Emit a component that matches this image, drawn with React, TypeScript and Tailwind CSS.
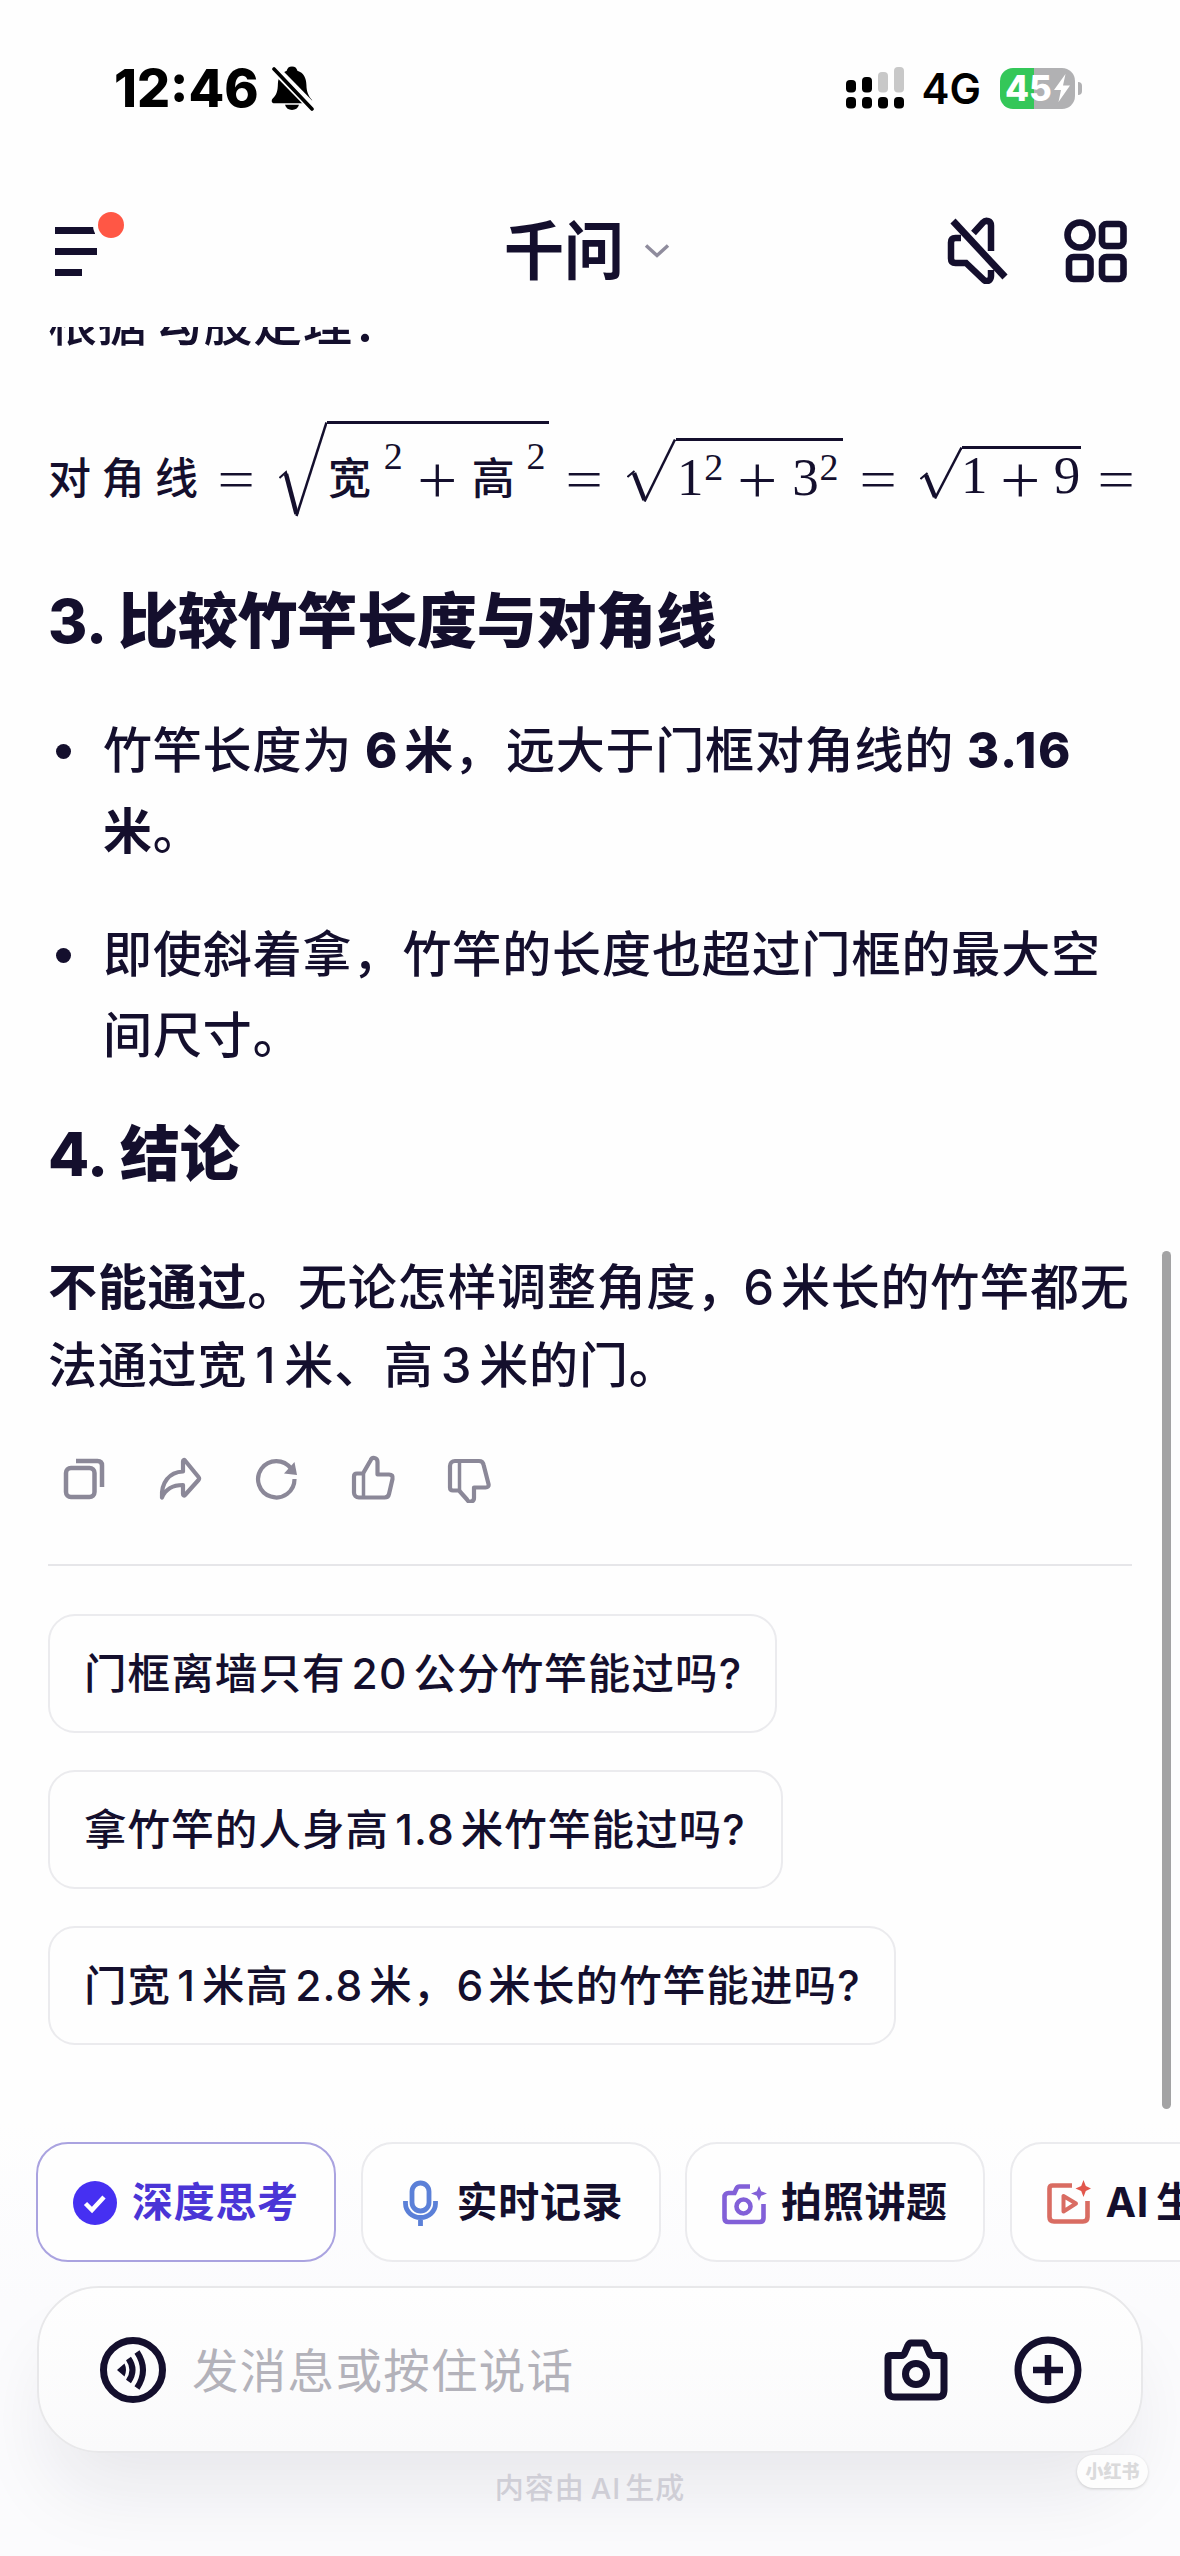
import type { ReactNode } from "react";

const Ink = "#140f2d";

function Bell() {
  return (
    <svg width="44" height="46" viewBox="0 0 44 46" className="ml-[12px]" fill="#000">
      <path d="M21 1.500c3 0 4.800 1.600 5.400 4.200 6.400 2 8.800 7.500 9 14 .2 7.500 2 11 5.600 15.300.6 1.600-.4 3.300-2.500 3.300H3.500c-2.600 0-3.500-2-2.200-4.300 4.200-4 5.500-8 5.600-15.300.2-6 3.300-11 8.800-13C16.300 3.100 18 1.500 21 1.500z" />
      <path d="M14 39.800h14c-1 3.400-3.600 5.200-7 5.200s-6-1.800-7-5.200z" />
      <path d="M1 1l41 42" stroke="#fefefe" strokeWidth="9" />
      <path d="M3 4l38 40" stroke="#000" strokeWidth="3.600" strokeLinecap="round" />
    </svg>
  );
}

function Signal() {
  return (
    <svg width="58" height="42" viewBox="0 0 58 42">
      <rect x="0" y="13" width="10" height="12.500" rx="4" />
      <rect x="16" y="10" width="10" height="15.500" rx="4" />
      <rect x="32" y="5" width="10" height="20.500" rx="4" fill="#c8c8c8" />
      <rect x="48" y="0" width="10" height="25.500" rx="4" fill="#c8c8c8" />
      <rect x="0" y="30" width="10" height="11.500" rx="4" />
      <rect x="16" y="30" width="10" height="11.500" rx="4" />
      <rect x="32" y="30" width="10" height="11.500" rx="4" />
      <rect x="48" y="30" width="10" height="11.500" rx="4" />
    </svg>
  );
}

function Battery() {
  return (
    <div className="ml-[19px] flex items-center">
      <div className="flex h-[41px] w-[75px] items-center rounded-[13px] bg-[linear-gradient(90deg,#34c759_34px,#b1b1b3_34px)] pl-[5px] text-white">
        <span className="text-[35px] leading-none font-extrabold">45</span>
        <svg width="18" height="30" viewBox="0 0 17 30" className="ml-px" fill="#fff">
          <path d="M12 1L0.500 17h7L5 29 16.500 12.500h-7z" />
        </svg>
      </div>
      <div className="ml-[3px] h-[13px] w-[4px] rounded-r-full bg-[#b1b1b3]" />
    </div>
  );
}

function Mute() {
  return (
    <svg width="64" height="68" viewBox="0 0 64 68" fill="none" stroke={Ink} strokeWidth="6.500">
      <path d="M27.500 17l9.500-10.500c3-3 8-1.500 8 3V35" />
      <path d="M15 22H9.500C6.500 22 5 23.500 5 26.500v16c0 3 1.500 4.500 4.500 4.500H20l18 17c3 2.500 7 .5 7-4v-6" />
      <path d="M1 8l52 56" stroke="#fefefe" strokeWidth="5" transform="translate(2 2)" opacity="0" />
      <path d="M7 5l52 56" strokeWidth="7" />
    </svg>
  );
}

function Grid() {
  return (
    <svg width="64" height="64" viewBox="0 0 64 64" fill="none" stroke={Ink} strokeWidth="6.600">
      <circle cx="16" cy="16" r="12.500" />
      <rect x="38" y="5" width="21.500" height="22" rx="4.500" />
      <rect x="5" y="38" width="21.500" height="22" rx="4.500" />
      <rect x="38" y="38" width="21.500" height="22" rx="4.500" />
    </svg>
  );
}

function Op({ plus }: { plus?: boolean }) {
  return (
    <span className="flex w-[36px] shrink-0 justify-center font-['Inter'] text-[57px] leading-[40px] font-extralight">
      <span className={plus ? "scale-x-[1.350] scale-y-[1.300]" : "scale-x-[1.450]"}>{plus ? "+" : "="}</span>
    </span>
  );
}

function Num({ children, sup }: { children: ReactNode; sup?: string }) {
  return (
    <span className="-mb-[3px] flex font-['Liberation_Serif'] text-[53px] leading-[53px]">
      {children}
      {sup && <span className="-mt-[3px] text-[38px] leading-[38px]">{sup}</span>}
    </span>
  );
}

function Sqrt({ h, children }: { h: "lg" | "md" | "sm"; children: ReactNode }) {
  const box =
    h === "lg" ? "h-[96px] -mb-[21px]" : h === "md" ? "h-[64px] -mb-[6px]" : "h-[53px] -mb-[3px]";
  return (
    <span className={"flex items-stretch self-end " + box}>
      {h === "lg" && (
        <svg width="48" height="96" viewBox="0 0 48 96" fill="none" stroke={Ink}>
          <path d="M0.500 57l6.500-6 11 43" strokeWidth="2" />
          <path d="M7 53l10.500 40" strokeWidth="4.500" />
          <path d="M17.500 95L47.500 1.500" strokeWidth="2.500" />
        </svg>
      )}
      {h === "md" && (
        <svg width="49" height="64" viewBox="0 0 49 64" fill="none" stroke={Ink}>
          <path d="M0.500 39l7-6" strokeWidth="2" />
          <path d="M7 35l10.500 27" strokeWidth="4.500" />
          <path d="M17.500 63.500L48 1.500" strokeWidth="2.500" />
        </svg>
      )}
      {h === "sm" && (
        <svg width="42" height="53" viewBox="0 0 42 53" fill="none" stroke={Ink}>
          <path d="M0.500 33l7-6" strokeWidth="2" />
          <path d="M6 29l9 22" strokeWidth="4.500" />
          <path d="M15 52.500L41.500 1.500" strokeWidth="2.500" />
        </svg>
      )}
      <span className="flex items-end border-t-[3px] border-[#140f2d]">{children}</span>
    </span>
  );
}

function Formula() {
  return (
    <div className="mt-[56px] flex h-[75px] w-[1084px] shrink-0 items-end [clip-path:inset(-20px_0_-40px_0)]">
      <span className="mr-[6px] -mb-[4px] w-[165px] shrink-0 text-[43px] leading-[43px] font-medium tracking-[10.500px] whitespace-nowrap">
        对角线
      </span>
      <Op />
      <span className="w-[24px] shrink-0" />
      <Sqrt h="lg">
        <span className="mb-[21px] flex w-[222px] items-end text-[43px] leading-[43px] font-medium">
          <span className="-mb-[4px] ml-px">宽</span>
          <span className="mb-[21px] ml-[12px] font-['Liberation_Serif'] text-[38px] leading-[38px] font-normal">2</span>
          <span className="w-[16px]" />
          <Op plus />
          <span className="-mb-[4px] ml-[16px]">高</span>
          <span className="mb-[21px] ml-[11px] font-['Liberation_Serif'] text-[38px] leading-[38px] font-normal">2</span>
        </span>
      </Sqrt>
      <span className="w-[18px] shrink-0" />
      <Op />
      <span className="w-[24px] shrink-0" />
      <Sqrt h="md">
        <span className="mb-px flex w-[167px] items-end">
          <span className="ml-px"><Num sup="2">1</Num></span>
          <span className="w-[16px]" />
          <span className="mb-[5px]"><Op plus /></span>
          <span className="ml-[16px]"><Num sup="2">3</Num></span>
        </span>
      </Sqrt>
      <span className="w-[18px] shrink-0" />
      <Op />
      <span className="w-[23px] shrink-0" />
      <Sqrt h="sm">
        <span className="flex w-[119px] items-end">
          <span className="-ml-px"><Num>1</Num></span>
          <span className="w-[15px]" />
          <span className="mb-[3px]"><Op plus /></span>
          <span className="ml-[15px]"><Num>9</Num></span>
        </span>
      </Sqrt>
      <span className="w-[18px] shrink-0" />
      <Op />
    </div>
  );
}

function ActionRow() {
  return (
    <div className="mt-[49px] ml-[13px] flex h-[48px] shrink-0 items-center gap-[48px]">
      <svg width="48" height="48" viewBox="0 0 48 48" fill="none" stroke="#8b8898" strokeWidth="4.500">
        <rect x="5" y="13" width="28.500" height="29" rx="5" />
        <path d="M15 6h21.500c3 0 4.500 1.500 4.500 4.500v21.500" />
      </svg>
      <svg width="48" height="48" viewBox="0 0 48 48" fill="none" stroke="#8b8898" strokeWidth="4.200" strokeLinejoin="round">
        <path d="M26 6.500c0-1.500 1-2 2-1L41.500 22c.8 1 .8 2 0 3L28 40c-1 1-2 .5-2-1v-9C16.500 30 9 33 5 42.500 4 28 12 17 26 16.500z" />
      </svg>
      <svg width="48" height="48" viewBox="0 0 48 48" fill="none" stroke="#8b8898" strokeWidth="4.200">
        <path d="M41.500 24A18.200 18.200 0 1 1 38 13.500" />
        <path d="M41.500 7L44 20l-13-1.500z" fill="#8b8898" stroke="none" />
      </svg>
      <svg width="48" height="48" viewBox="0 0 48 48" fill="none" stroke="#8b8898" strokeWidth="4.200" strokeLinejoin="round">
        <path d="M14 18.500H8c-2 0-3 1-3 3v16c0 3 2 5 5 5h25.500c2.500 0 4-1 4.500-3.500l3.500-15c.5-3-.5-4.500-3.500-4.500H28.500V7c0-4.500-5.500-5.500-7-1.500z" />
        <path d="M14.500 18.500v24" strokeWidth="3.500" />
      </svg>
      <svg width="48" height="48" viewBox="0 0 48 48" fill="none" stroke="#8b8898" strokeWidth="4.200" strokeLinejoin="round">
        <path d="M14 35.500H8c-2 0-3-1-3-3V11c0-3 2-5 5-5h24c2.500 0 4 1 4.500 3.500L43.500 29c.5 2-.5 3.500-3 3.500H29V43c0 4-5.500 5-7 1.500z" />
        <path d="M14.500 6v29.500" strokeWidth="3.500" />
      </svg>
    </div>
  );
}

function Suggestion({ width, children }: { width: string; children: ReactNode }) {
  return (
    <div className={"flex h-[119px] shrink-0 items-center rounded-[27px] border-2 border-[#ebebee] pt-[2px] pl-[34px] text-[42.500px] font-medium tracking-[1.100px] whitespace-nowrap " + width}>
      <span>{children}</span>
    </div>
  );
}

function N({ children }: { children: ReactNode }) {
  return <span className="mx-[6px]">{children}</span>;
}

function Tag({ active, icon, children }: { active?: boolean; icon: ReactNode; children: ReactNode }) {
  return (
    <div className={"flex h-[120px] w-[300px] shrink-0 items-center rounded-[32px] border-2 bg-[#fefefe] pt-px pl-[34px] text-[41px] font-bold tracking-[0.700px] whitespace-nowrap " + (active ? "border-[#aaa3e0] text-[#4a35d6]" : "border-[#ebebee]")}>
      <span className="mr-[12px] flex w-[48px] shrink-0">{icon}</span>
      <span>{children}</span>
    </div>
  );
}

export default function App() {
  return (
    <div className="relative flex h-[2556px] w-[1180px] flex-col overflow-hidden bg-[#fefefe] font-['Inter','Noto_Sans_CJK_SC',sans-serif] text-[#140f2d]">
      <div className="flex h-[176px] shrink-0 items-center justify-between pr-[98px] pl-[114px] text-black">
        <div className="flex items-center text-[52px] leading-none font-extrabold">
          <span className="mt-[2px]">12:46</span>
          <Bell />
        </div>
        <div className="flex items-center">
          <Signal />
          <span className="mt-[2px] ml-[18px] text-[42px] leading-none font-semibold">4G</span>
          <Battery />
        </div>
      </div>

      <header className="flex h-[151px] shrink-0 items-start pt-[40px]">
        <svg width="76" height="70" viewBox="0 0 76 70" className="-mt-[6px] ml-[52px] shrink-0">
          <path d="M3 17h40v7H3zM3 38h42v7H3zM3 59h27v7H3z" fill={Ink} />
          <circle cx="59" cy="15" r="18" fill="#fefefe" />
          <circle cx="59" cy="15" r="13" fill="#ff5745" />
        </svg>
        <div className="ml-[376px] flex w-[168px] shrink-0 items-center">
          <span className="text-[60px] leading-[70px] font-bold whitespace-nowrap">
            <span className="inline-block scale-y-[1.060]">千问</span>
          </span>
          <svg width="26" height="16" viewBox="0 0 26 16" className="ml-[20px]" fill="none" stroke="#8f8c9d" strokeWidth="3.500">
            <path d="M2 2.500l11 10 11-10" />
          </svg>
        </div>
        <span className="ml-[274px] shrink-0"><Mute /></span>
        <span className="mt-[3px] ml-[54px] shrink-0"><Grid /></span>
      </header>

      <main className="flex h-[1795px] shrink-0 flex-col overflow-hidden px-[48px] text-[49px] leading-[81.500px] font-medium tracking-[0.800px]">
        <p className="-mt-[44px]">根据<span className="ml-[6px]">勾股定理：</span></p>
        <Formula />
        <h2 className="mt-[85px] text-[60px] leading-[80px] font-extrabold tracking-[-0.200px] whitespace-nowrap">
          3.<span className="ml-[11px] font-black">比较竹竿长度与对角线</span>
        </h2>
        <ul className="mt-[49px] flex flex-col gap-[41px]">
          <li className="flex">
            <span className="mt-[34px] ml-[8px] h-[15px] w-[15px] shrink-0 rounded-full bg-[#140f2d]" />
            <span className="ml-[32px] whitespace-nowrap">
              竹竿长度为<b className="ml-[13px]"><span className="font-extrabold">6</span><span className="ml-[6px]">米</span></b>，<span className="ml-[2px]">远大于门框对角线的</span><b className="ml-[13px] font-extrabold tracking-[1.800px]">3.16</b>
              <br />
              <b>米</b>。
            </span>
          </li>
          <li className="flex">
            <span className="mt-[34px] ml-[8px] h-[15px] w-[15px] shrink-0 rounded-full bg-[#140f2d]" />
            <span className="ml-[32px] tracking-[0.900px] whitespace-nowrap">
              即使斜着拿，竹竿的长度也超过门框的最大空
              <br />
              间尺寸。
            </span>
          </li>
        </ul>
        <h2 className="mt-[37px] text-[60px] leading-[80px] font-extrabold tracking-[-0.200px] whitespace-nowrap">
          4.<span className="ml-[12px] font-black">结论</span>
        </h2>
        <p className="mt-[55px] leading-[78.500px] whitespace-nowrap">
          <b>不能通过</b>。<span className="ml-px">无论怎样调整角度，</span><span className="mr-[6px] -ml-[3px]">6</span>米长的竹竿都无
          <br />
          法通过宽<span className="mr-[8px] ml-[8px]">1</span>米、高<span className="mr-[7px] ml-[7px]">3</span>米的门。
        </p>
        <ActionRow />
        <div className="mt-[61px] h-[2px] shrink-0 bg-[#e6e6e9]" />
        <div className="mt-[48px] flex flex-col gap-[37px]">
          <Suggestion width="w-[729px]">门框离墙只有<N>20</N>公分竹竿能过吗?</Suggestion>
          <Suggestion width="w-[735px]">拿竹竿的人身高<N>1.8</N>米竹竿能过吗?</Suggestion>
          <Suggestion width="w-[848px]">门宽<N>1</N>米高<N>2.8</N>米，<span className="mr-[4px]">6</span>米长的竹竿能进吗?</Suggestion>
        </div>
      </main>

      <div className="absolute top-[1251px] right-[9px] h-[858px] w-[9px] rounded-full bg-[#a3a3a4]" />

      <footer className="flex flex-1 flex-col overflow-hidden bg-[linear-gradient(180deg,#fefefe_0px,#fbfbfd_180px,#fbfbfd_434px)] pt-[20px]">
        <div className="flex gap-[24.500px] overflow-hidden pl-[36px]">
          <Tag
            active
            icon={
              <svg width="46" height="46" viewBox="0 0 46 46">
                <circle cx="23" cy="23" r="22" fill="#4630f2" />
                <path d="M13.500 23.500l6.500 6.500 12-13" fill="none" stroke="#fff" strokeWidth="4.500" />
              </svg>
            }
          >
            深度思考
          </Tag>
          <Tag
            icon={
              <svg width="46" height="46" viewBox="0 0 46 46" fill="none" stroke="#5b80d8" strokeWidth="4.800">
                <rect x="15" y="3" width="17" height="28" rx="8.500" />
                <path d="M8.500 21v2.500a15 14 0 0 0 30 0V21M23.500 37.500V46" />
              </svg>
            }
          >
            实时记录
          </Tag>
          <Tag
            icon={
              <svg width="46" height="46" viewBox="0 0 46 46" fill="none" stroke="#8260d8" strokeWidth="4.600">
                <path d="M29 6.500H18.500c-1.500 0-2.300.6-3 2L13.500 13H7.500C5 13 3.500 14.500 3.500 17v21c0 2.500 1.500 4 4 4h31c2.500 0 4-1.500 4-4V24" />
                <circle cx="22.500" cy="26.500" r="7" />
                <path d="M38 6l2.200 5.300L46 13.500l-5.800 2.200L38 21l-2.200-5.300-5.800-2.200 5.800-2.200z" fill="#8260d8" stroke="none" />
              </svg>
            }
          >
            拍照讲题
          </Tag>
          <Tag
            icon={
              <svg width="46" height="46" viewBox="0 0 46 46" fill="none" stroke="#d96c62" strokeWidth="4.600">
                <path d="M26 5.500H6.500C4.500 5.500 3.500 6.500 3.500 8.500V37c0 3 1.500 4.500 4.500 4.500h29c3 0 4.500-1.500 4.500-4.500V21" />
                <path d="M17.500 16v15.500l12.500-8z" strokeWidth="4" strokeLinejoin="round" />
                <path d="M37.500 0l2.300 6L45 8.500 39.800 11l-2.300 6-2.300-6-5.700-2.500L35.200 6z" fill="#e2574c" stroke="none" />
              </svg>
            }
          >
            AI<span className="ml-[7px]">生成视频</span>
          </Tag>
        </div>

        <div className="mt-[24px] ml-[37px] flex h-[167px] w-[1106px] shrink-0 items-center rounded-[62px] border-2 border-[#e8e8ea] bg-[linear-gradient(180deg,#fefefe,#fafafb)] pl-[58px] shadow-[0_50px_80px_-14px_rgba(25,22,45,0.085)]">
          <svg width="72" height="72" viewBox="0 0 72 72" fill="none" stroke={Ink}>
            <circle cx="36" cy="36" r="29.500" strokeWidth="7" />
            <path d="M20 36l7.500-6.500q3 6.500 0 13z" fill={Ink} stroke="none" />
            <path d="M31.500 24.500q8 11.500 0 23M40 18q12 18 0 36" strokeWidth="6" />
          </svg>
          <span className="mt-[4px] ml-[23px] text-[46.500px] tracking-[1.300px] whitespace-nowrap text-[#b3b2ba]">发消息或按住说话</span>
          <svg width="72" height="72" viewBox="0 0 72 72" className="ml-[306px] shrink-0" fill="none" stroke={Ink} strokeWidth="7">
            <path d="M9 23.500h11.500c1.500 0 2.500-.8 3-2l3.500-8c.6-1.500 1.500-2.500 3-2.500h12c1.500 0 2.400 1 3 2.500l3.500 8c.5 1.200 1.500 2 3 2H60.500c1.700 0 2.500.8 2.500 2.500v32c0 5-2 7-7 7H14c-5 0-7-2-7-7V26c0-1.700.8-2.500 2-2.500z" transform="translate(1 -2)" />
            <circle cx="36" cy="40" r="10.500" />
          </svg>
          <svg width="72" height="72" viewBox="0 0 72 72" className="ml-[60px] shrink-0" fill="none" stroke={Ink} strokeWidth="7">
            <circle cx="36" cy="36" r="30" />
            <path d="M21 36h30M36 21v30" strokeWidth="6.500" />
          </svg>
        </div>

        <p className="mt-[16px] text-center text-[29px] leading-[40px] font-medium tracking-[1px] text-[#cfced6]">
          内容由<span className="mr-[4px] ml-[6px]">AI</span>生成
        </p>
      </footer>

      <div className="absolute top-[2455px] left-[1077px] flex h-[33px] w-[71px] items-center justify-center rounded-full bg-[#fdfdfd] text-[18px] font-black text-[#dadadb] shadow-[0_1px_3px_rgba(0,0,0,0.160)]">
        小红书
      </div>
    </div>
  );
}
